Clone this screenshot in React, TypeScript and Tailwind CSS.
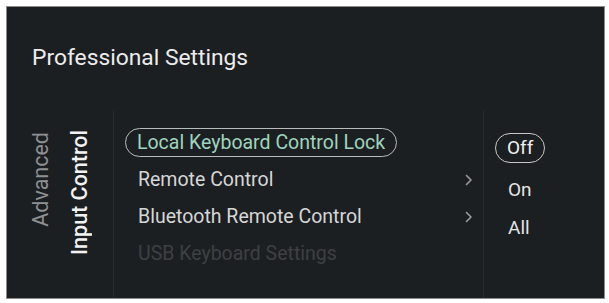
const font = { fontFamily: "Roboto, 'Noto Sans', sans-serif" };

function Chevron() {
  return (
    <svg width="8" height="12" viewBox="0 0 8 12" fill="none" className="shrink-0">
      <path d="M1.5 1.5 L6 6 L1.5 10.5" stroke="#9a9c9e" strokeWidth="1.6" strokeLinecap="round" strokeLinejoin="round" />
    </svg>
  );
}

const items = [
  { label: "Remote Control", chevron: true },
  { label: "Bluetooth Remote Control", chevron: true },
  { label: "USB Keyboard Settings", dim: true },
];

export default function App() {
  return (
    <div className="h-[303px] w-[609px] bg-white p-[6px]" style={font}>
      <div className="flex h-[293px] w-[599px] flex-col border border-[#8c8c8c] bg-[#1c1f22]">
        {/* Title */}
        <div className="pl-[25px] pt-[38px] text-[22.8px] leading-[26px] text-[#ececec]">
          Professional Settings
        </div>

        <div className="mt-[40px] flex flex-1">
          {/* Breadcrumb */}
          <div className="flex w-[106px] items-start gap-[19px] pl-[24px] pt-[19px]">
            <span className="mt-[2px] rotate-180 text-[21.5px] leading-[20px] text-[#8e9093] [writing-mode:vertical-rl]">
              Advanced
            </span>
            <span className="rotate-180 text-[21.5px] font-medium leading-[20px] text-[#f2f2f2] [writing-mode:vertical-rl]">
              Input Control
            </span>
          </div>

          {/* Menu */}
          <div className="flex w-[370px] flex-col border-l border-[#2a2d30] pl-[11px] pr-[10px] pt-[13px]">
            <div className="flex h-[37px] items-center">
              <span className="rounded-full border-[1.5px] border-[#b8bcbc] px-[11px] text-[19.5px] leading-[27px] text-[#9fd4bd]">
                Local Keyboard Control Lock
              </span>
            </div>
            {items.map((it) => (
              <div key={it.label} className="flex h-[37px] items-center justify-between pl-[13px]">
                <span className={`text-[19.5px] ${it.dim ? "text-[#3d4043]" : "text-[#d6d6d6]"}`}>{it.label}</span>
                {it.chevron && <Chevron />}
              </div>
            ))}
          </div>

          {/* Options */}
          <div className="flex flex-1 flex-col border-l border-[#2a2d30] pl-[11px] pt-[21px]">
            <div className="flex h-[32px] items-center">
              <span className="rounded-full border-[1.5px] border-[#c8c8c8] px-[11px] text-[19px] leading-[28px] text-[#f0f0f0]">
                Off
              </span>
            </div>
            <div className="mt-[10px] flex h-[32px] items-center pl-[13px] text-[19px] text-[#e4e4e4]">On</div>
            <div className="mt-[6px] flex h-[32px] items-center pl-[13px] text-[19px] text-[#e4e4e4]">All</div>
          </div>
        </div>
      </div>
    </div>
  );
}
